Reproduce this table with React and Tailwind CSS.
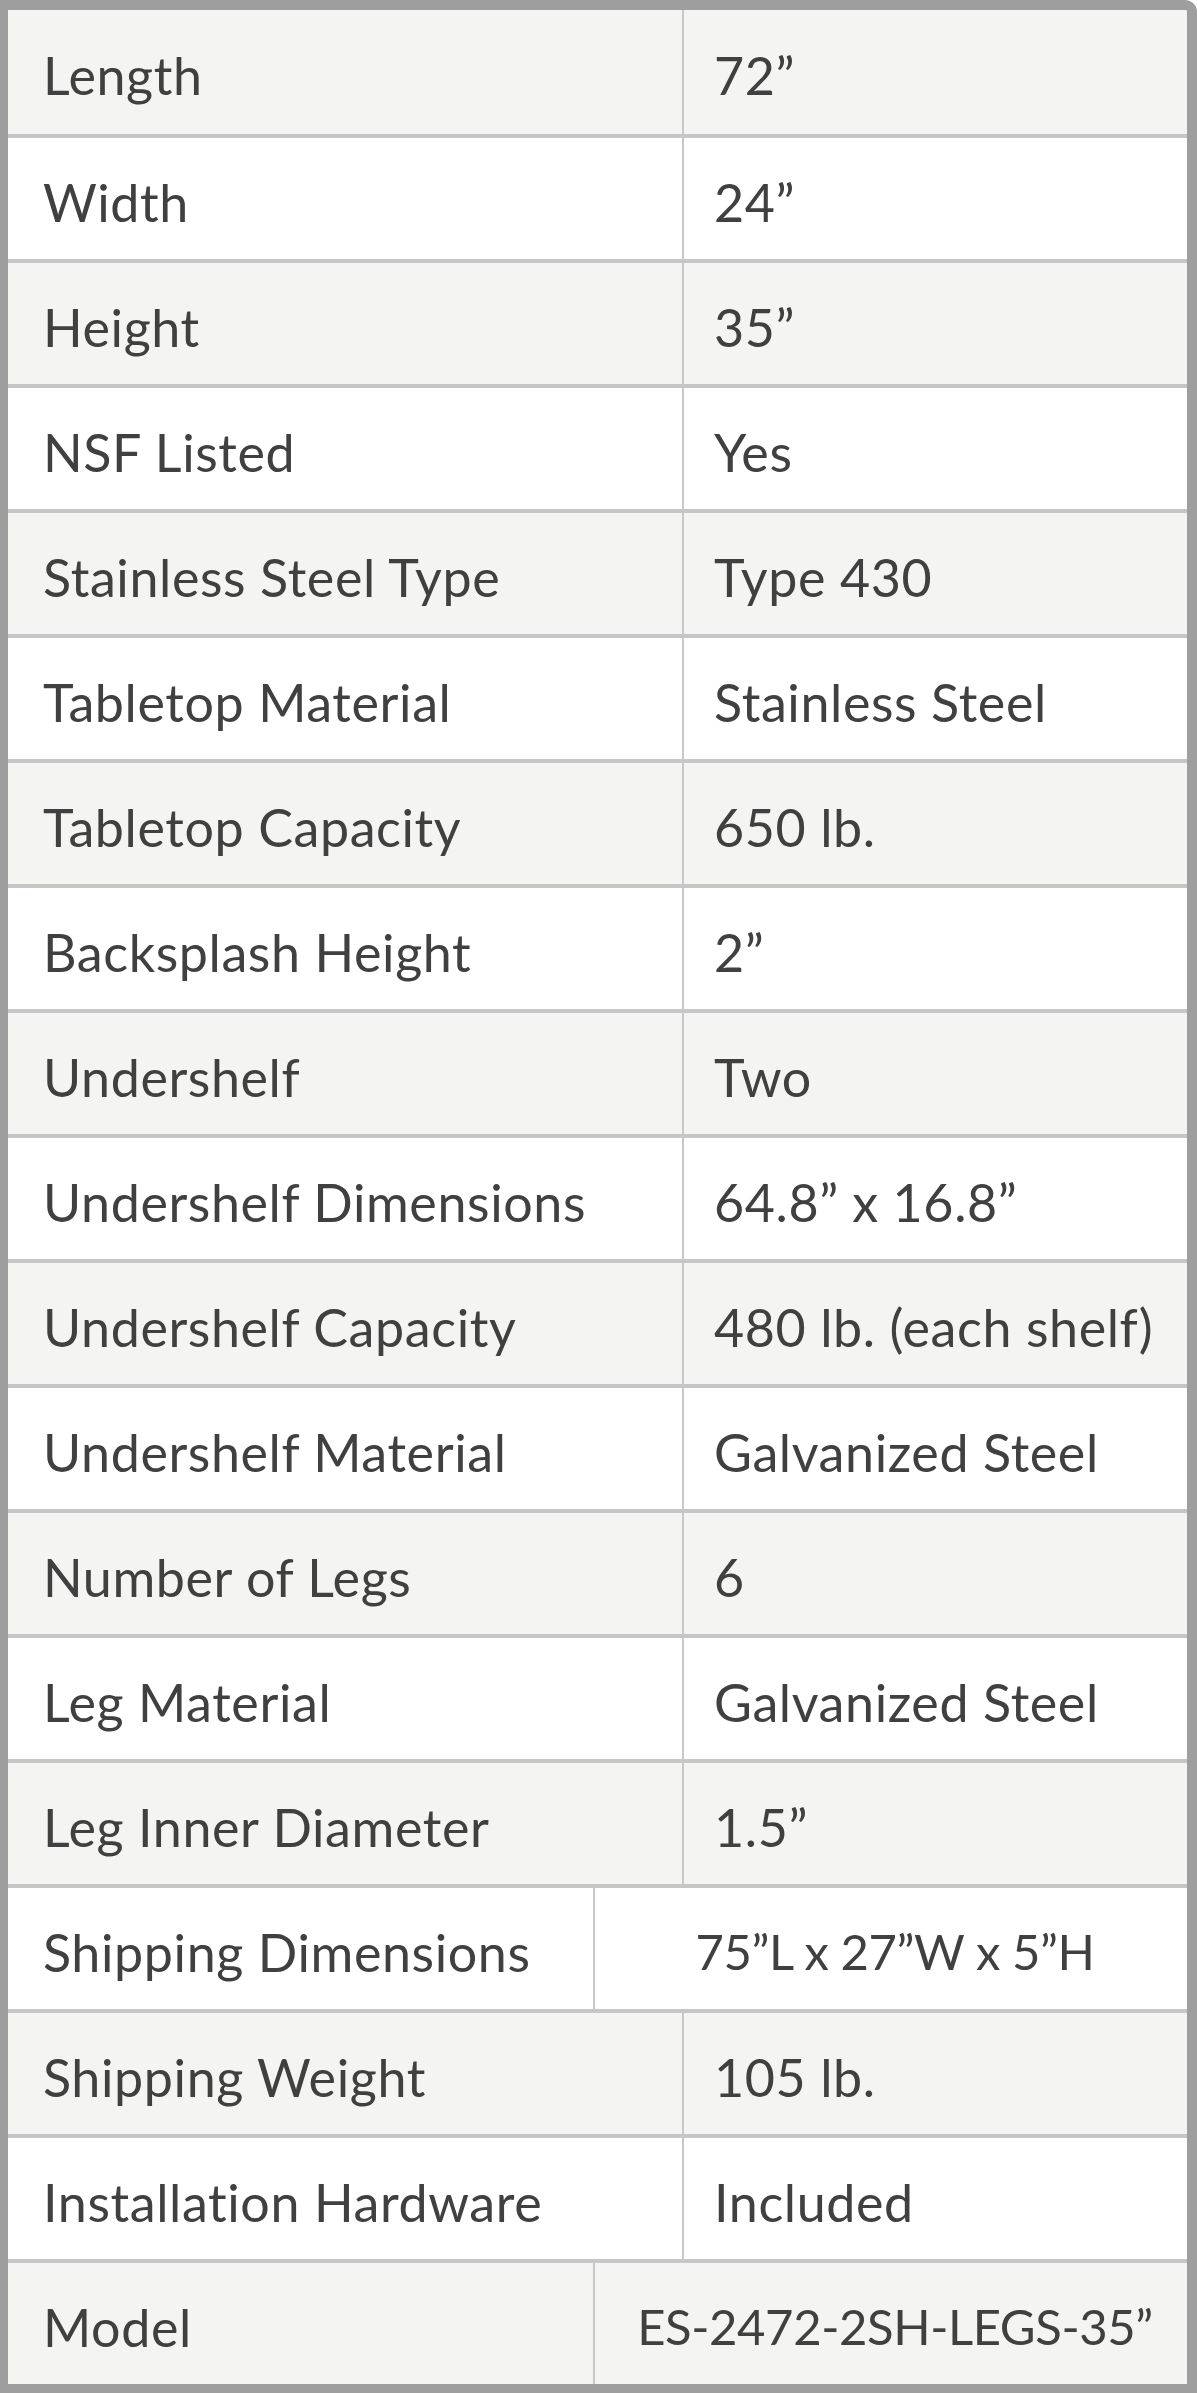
import React from "react";

const specs = [
  ["Length", "72”"],
  ["Width", "24”"],
  ["Height", "35”"],
  ["NSF Listed", "Yes"],
  ["Stainless Steel Type", "Type 430"],
  ["Tabletop Material", "Stainless Steel"],
  ["Tabletop Capacity", "650 lb."],
  ["Backsplash Height", "2”"],
  ["Undershelf", "Two"],
  ["Undershelf Dimensions", "64.8” x 16.8”"],
  ["Undershelf Capacity", "480 lb. (each shelf)"],
  ["Undershelf Material", "Galvanized Steel"],
  ["Number of Legs", "6"],
  ["Leg Material", "Galvanized Steel"],
  ["Leg Inner Diameter", "1.5”"],
  ["Shipping Dimensions", "75”L x 27”W x 5”H", true],
  ["Shipping Weight", "105 lb."],
  ["Installation Hardware", "Included"],
  ["Model", "ES-2472-2SH-LEGS-35”", true],
];

const SpecRow = ({ label, value, wide, index }) => {
  const bg = index % 2 === 0 ? "bg-[#f4f4f2]" : "bg-white";
  return (
    <div
      className={`flex ${bg} ${index === 0 ? "h-[124px]" : "h-[125px] border-t-4 border-[#c6c6c6]"}`}
    >
      <div
        className={`flex items-center pt-[6px] pl-[35px] border-r-2 border-[#c8c8c8] ${wide ? "w-[587px]" : "w-[676px]"}`}
      >
        {label}
      </div>
      <div
        className={`flex flex-1 items-center pt-[6px] ${wide ? "justify-center pl-[8px] text-[49px] tracking-[-0.4px]" : "pl-[30px]"}`}
      >
        {value}
      </div>
    </div>
  );
};

const App = () => {
  return (
    <div className="w-[1197px] h-[2393px] bg-white">
      <div
        className="flex flex-col h-full border-[#9e9e9e] border-t-[10px] border-b-[9px] border-l-[8px] border-r-[10px] rounded-tr-[12px] overflow-hidden text-[#404040] text-[52px] tracking-[0.6px] leading-none"
        style={{ fontFamily: "Lato, 'Open Sans', sans-serif" }}
      >
        {specs.map(([label, value, wide], i) => (
          <SpecRow key={label} label={label} value={value} wide={wide} index={i} />
        ))}
      </div>
    </div>
  );
};

export default App;
